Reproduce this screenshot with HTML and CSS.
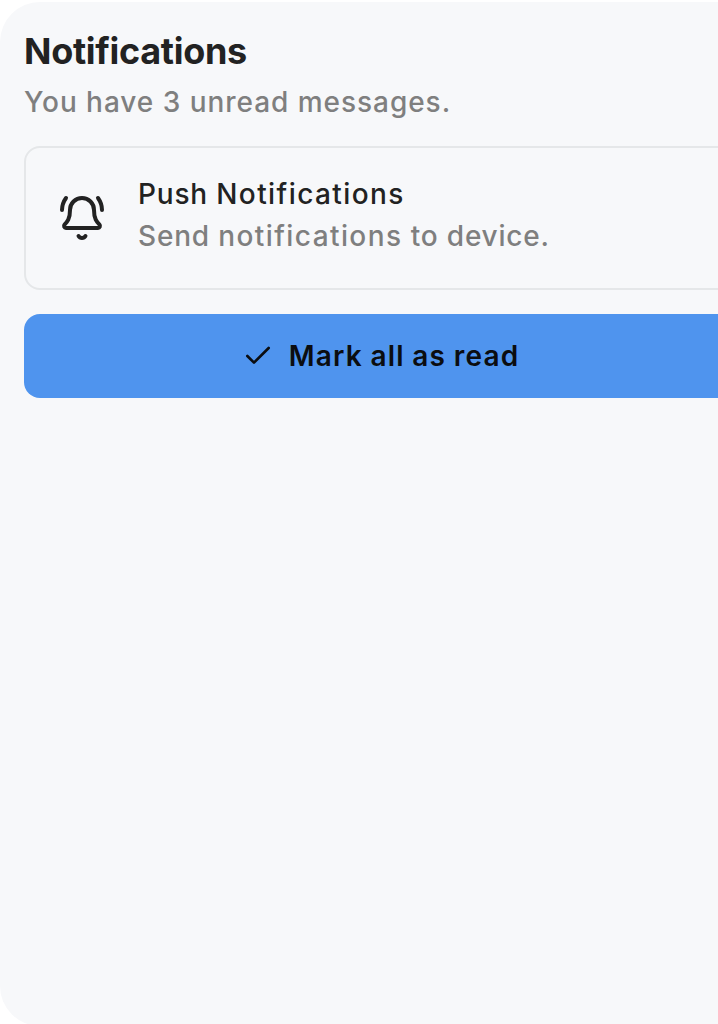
FILE: index.html
```html
<!DOCTYPE html>
<html lang="en">
<head>
<meta charset="utf-8">
<title>Notifications</title>
<link rel="stylesheet" href="styles.css">
</head>
<body>
<main class="card">
  <header class="header">
    <h1 class="title">Notifications</h1>
    <p class="description">You have 3 unread messages.</p>
  </header>
  <section class="option">
    <svg class="bell" viewBox="0 0 24 24" aria-hidden="true">
      <path d="M10.268 21a2 2 0 0 0 3.464 0"/>
      <path d="M22 8c0-2.3-.8-4.3-2-6"/>
      <path d="M3.262 15.326A1 1 0 0 0 4 17h16a1 1 0 0 0 .74-1.673C19.41 13.956 18 12.499 18 8A6 6 0 0 0 6 8c0 4.499-1.411 5.956-2.738 7.326"/>
      <path d="M4 2C2.8 3.7 2 5.7 2 8"/>
    </svg>
    <div class="option-text">
      <p class="option-title">Push <span class="wide">Notifications</span></p>
      <p class="option-detail">Send <span class="wide">notifications</span> to device.</p>
    </div>
  </section>
  <button class="action">
    <svg class="check" viewBox="0 0 24 24" aria-hidden="true"><path d="M20 6 9 17l-5-5"/></svg>
    <span class="action-label">Mark all as read</span>
  </button>
</main>
</body>
</html>
```
FILE: styles.css
```css
* { box-sizing: border-box; margin: 0; }
html, body { height: 100%; overflow: hidden; }
body { background: #fff; padding-top: 2px; font-family: Inter, sans-serif; color: #222; }
svg { fill: none; stroke: currentColor; stroke-width: 2; stroke-linecap: round; stroke-linejoin: round; flex: none; }
.card { width: 764px; height: 1024px; padding: 24px; border-radius: 40px; background: #f7f8fa; display: flex; flex-direction: column; gap: 24px; }
.header { height: 96px; padding-top: 3px; }
.title { font-size: 36px; line-height: 44px; font-weight: 700; letter-spacing: -0.3px; white-space: nowrap; }
.description { margin-top: 9px; font-size: 28px; line-height: 40px; font-weight: 500; letter-spacing: 0.96px; color: #7f7f7f; white-space: nowrap; }
.option { height: 144px; border: 2px solid #e5e7e9; border-radius: 16px; display: flex; align-items: center; gap: 32px; padding: 0 32px; }
.bell { width: 48px; height: 48px; }
.option-text { padding-bottom: 4px; font-size: 28px; font-weight: 500; letter-spacing: 0.8px; white-space: nowrap; }
.wide { letter-spacing: 1.42px; }
.option-title { line-height: 40px; }
.option-detail { line-height: 44px; color: #7f7f7f; }
.action { height: 84px; border: 0; padding: 0 9px 0 6px; border-radius: 16px; background: #4f94ee; color: #0b0d10; display: flex; align-items: center; justify-content: center; gap: 15px; font: 600 28px/40px Inter, sans-serif; letter-spacing: 1.15px; word-spacing: -0.5px; }
.check { width: 32px; height: 32px; }
```
